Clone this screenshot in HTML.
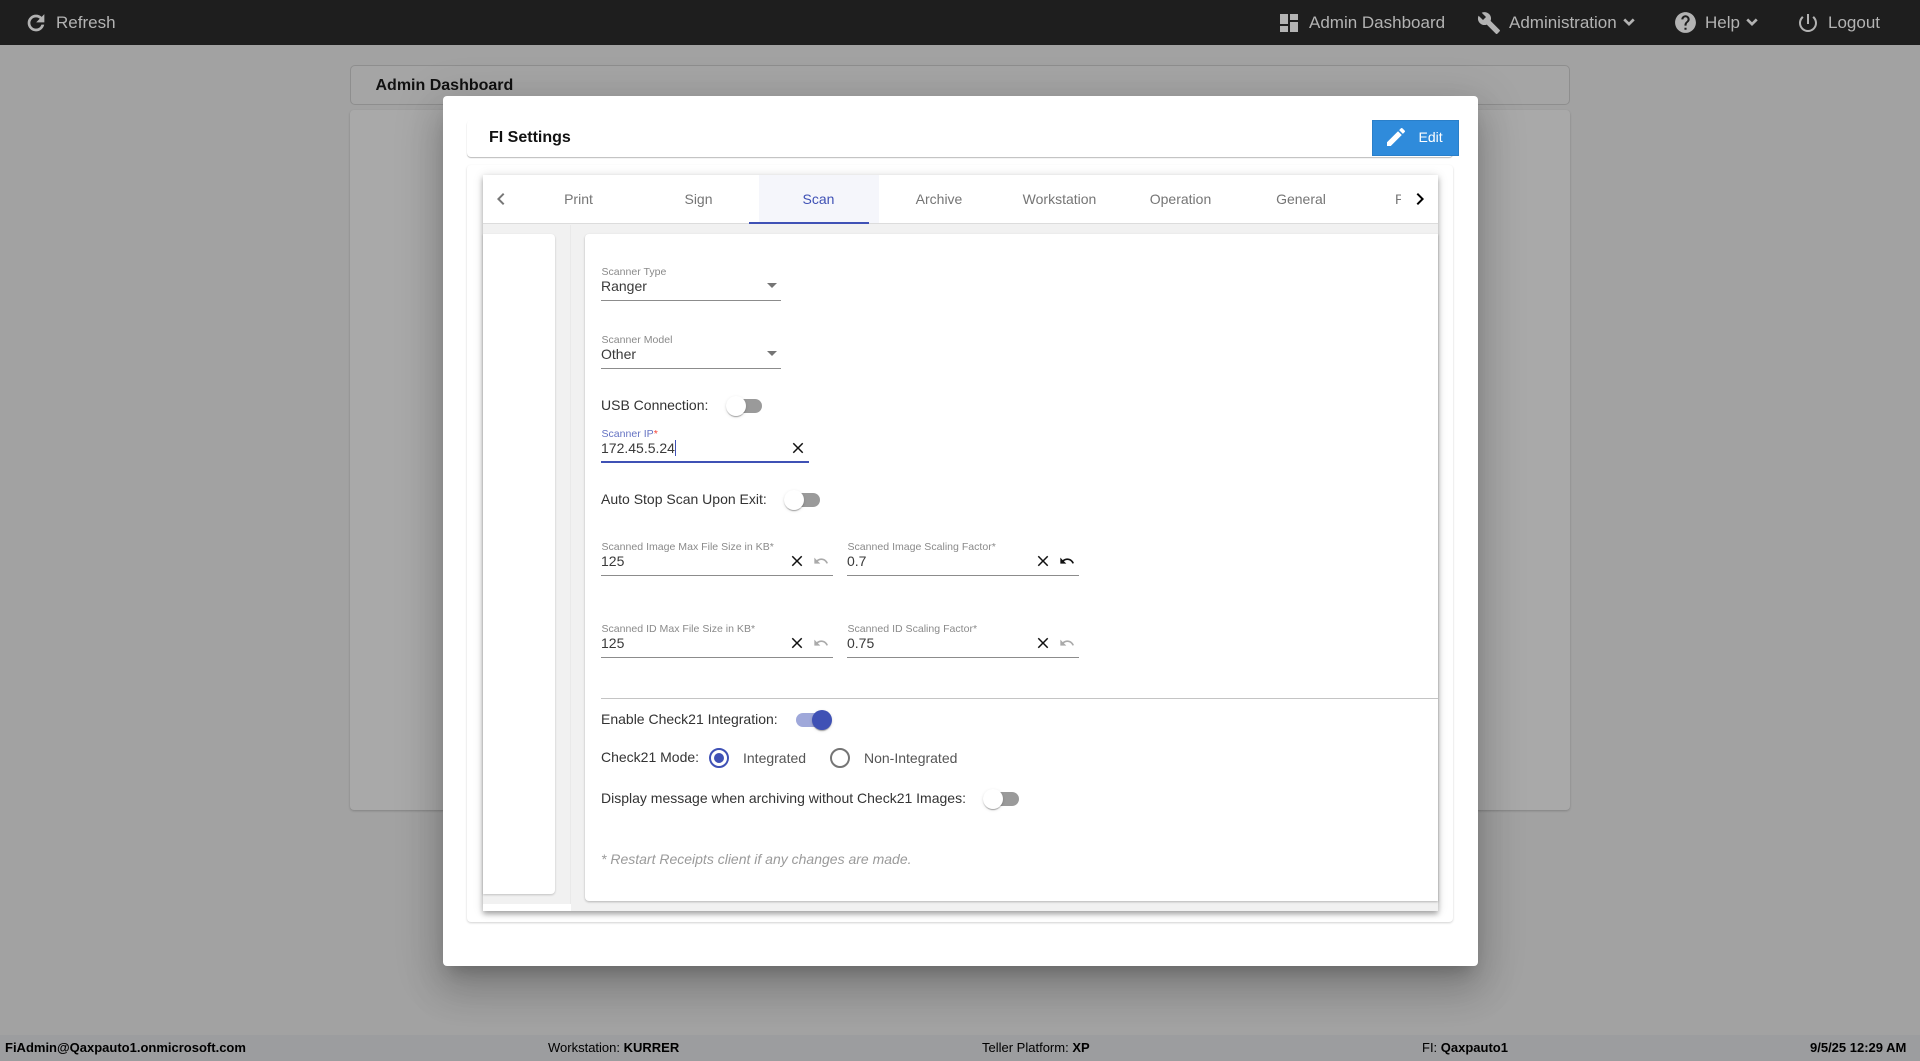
<!DOCTYPE html>
<html><head><meta charset="utf-8"><title>FI Settings</title>
<style>
html,body{margin:0;padding:0;width:1920px;height:1061px;overflow:hidden;background:#a2a2a2;font-family:"Liberation Sans",Arial,sans-serif}
div,span,svg{position:absolute;box-sizing:border-box}
b,i,em{position:static}
.t{white-space:nowrap;line-height:20px;font-size:14px;color:#333}
.n{white-space:nowrap;line-height:20px;font-size:17px;color:#b3b3b3;top:13px}
.l{white-space:nowrap;line-height:14px;font-size:10.55px;color:#8a8a8a}
.v{white-space:nowrap;line-height:20px;font-size:14px;color:#3a3a3a}
.u{height:1px;background:#8c8c8c}
.tab{white-space:nowrap;line-height:20px;font-size:14px;color:#757575;top:189px;width:120px;text-align:center}
.f{white-space:nowrap;line-height:16px;font-size:13px;color:#000;top:1040px}
.f b{font-weight:bold}
.tr{height:14px;border-radius:7px;background:#9a9a9a}
.th{width:20px;height:20px;border-radius:50%;background:#fff;box-shadow:0 2px 1px -1px rgba(0,0,0,.2),0 1px 1px 0 rgba(0,0,0,.14),0 1px 3px 0 rgba(0,0,0,.12)}
svg{display:block}
</style></head><body>

<!-- top nav -->
<div style="left:0;top:0;width:1920px;height:45px;background:#1e1e1e"></div>
<svg style="left:24px;top:11px" width="24" height="24" viewBox="0 0 24 24" fill="#b3b3b3" stroke="#b3b3b3" stroke-width=".7"><path d="M17.65 6.35C16.2 4.9 14.21 4 12 4c-4.42 0-7.99 3.58-7.99 8s3.57 8 7.99 8c3.73 0 6.84-2.55 7.73-6h-2.08c-.82 2.33-3.04 4-5.65 4-3.31 0-6-2.69-6-6s2.69-6 6-6c1.66 0 3.14.69 4.22 1.78L13 11h7V4l-2.35 2.35z"/></svg>
<span class="n" style="left:56px">Refresh</span>

<svg style="left:1277px;top:11px" width="24" height="24" viewBox="0 0 24 24" fill="#b3b3b3"><path d="M3 13h8V3H3v10zm0 8h8v-6H3v6zm10 0h8V11h-8v10zm0-18v6h8V3h-8z"/></svg>
<span class="n" style="left:1309px">Admin Dashboard</span>
<svg style="left:1477px;top:11px" width="24" height="24" viewBox="0 0 24 24" fill="#b3b3b3"><path d="M22.7 19l-9.1-9.1c.9-2.3.4-5-1.5-6.9-2-2-5-2.4-7.4-1.3L9 6 6 9 1.6 4.7C.4 7.1.9 10.1 2.9 12.1c1.9 1.9 4.6 2.4 6.9 1.5l9.1 9.1c.4.4 1 .4 1.4 0l2.3-2.3c.5-.4.5-1.1.1-1.4z"/></svg>
<span class="n" style="left:1509px">Administration</span>
<svg style="left:1619px;top:12px" width="20" height="20" viewBox="0 0 24 24" fill="#b3b3b3" stroke="#b3b3b3" stroke-width="1.2"><path d="M16.59 8.59L12 13.17 7.41 8.59 6 10l6 6 6-6z"/></svg>
<svg style="left:1673px;top:10px" width="25" height="25" viewBox="0 0 24 24" fill="#b3b3b3"><path d="M12 2C6.48 2 2 6.48 2 12s4.48 10 10 10 10-4.48 10-10S17.52 2 12 2zm1 17h-2v-2h2v2zm2.07-7.75l-.9.92C13.45 12.9 13 13.5 13 15h-2v-.5c0-1.1.45-2.1 1.17-2.83l1.24-1.26c.37-.36.59-.86.59-1.41 0-1.1-.9-2-2-2s-2 .9-2 2H8c0-2.21 1.79-4 4-4s4 1.79 4 4c0 .88-.36 1.68-.93 2.25z"/></svg>
<span class="n" style="left:1705px">Help</span>
<svg style="left:1742px;top:12px" width="20" height="20" viewBox="0 0 24 24" fill="#b3b3b3" stroke="#b3b3b3" stroke-width="1.2"><path d="M16.59 8.59L12 13.17 7.41 8.59 6 10l6 6 6-6z"/></svg>
<svg style="left:1796px;top:11px" width="24" height="24" viewBox="0 0 24 24" fill="#b3b3b3"><path d="M13 3h-2v10h2V3zm4.83 2.17l-1.42 1.42C17.99 7.86 19 9.81 19 12c0 3.87-3.13 7-7 7s-7-3.13-7-7c0-2.19 1.01-4.14 2.58-5.42L6.17 5.17C4.23 6.82 3 9.26 3 12c0 4.97 4.03 9 9 9s9-4.03 9-9c0-2.74-1.23-5.18-3.17-6.83z"/></svg>
<span class="n" style="left:1828px">Logout</span>

<!-- background page -->
<div style="left:350px;top:65px;width:1220px;height:40px;border:1px solid #8e8e8e;border-radius:5px;background:#a5a5a5"></div>
<span style="left:375.5px;top:76px;white-space:nowrap;line-height:20px;font-size:16px;font-weight:bold;color:#111">Admin Dashboard</span>
<div style="left:350px;top:110px;width:1220px;height:700px;background:#a9a9a9;border-radius:4px;box-shadow:0 1px 2px rgba(0,0,0,.2)"></div>

<!-- footer -->
<div style="left:0;top:1035px;width:1920px;height:26px;background:#9c9d9f"></div>
<span class="f" style="left:5px;font-weight:bold">FiAdmin@Qaxpauto1.onmicrosoft.com</span>
<span class="f" style="left:548px">Workstation: <b>KURRER</b></span>
<span class="f" style="left:982px">Teller Platform: <b>XP</b></span>
<span class="f" style="left:1422px">FI: <b>Qaxpauto1</b></span>
<span class="f" style="left:1810px;font-weight:bold">9/5/25 12:29 AM</span>

<!-- modal -->
<div style="left:443px;top:96px;width:1035px;height:870px;background:#fff;border-radius:4px;box-shadow:0 11px 15px -7px rgba(0,0,0,.2),0 24px 38px 3px rgba(0,0,0,.14),0 9px 46px 8px rgba(0,0,0,.12)"></div>

<!-- FI Settings header -->
<div style="left:467px;top:120px;width:986px;height:37px;background:#fff;border-radius:4px;box-shadow:0 1px 1px rgba(0,0,0,.28)"></div>
<span style="left:489px;top:128px;white-space:nowrap;line-height:20px;font-size:16px;font-weight:bold;color:#111">FI Settings</span>
<div style="left:1372px;top:120px;width:87px;height:36px;background:#2f8bdb;border:1px solid #2a7fc9"></div>
<svg style="left:1384px;top:125px" width="24" height="24" viewBox="0 0 24 24" fill="#fff"><path d="M3 17.25V21h3.75L17.81 9.94l-3.75-3.75L3 17.25zM20.71 7.04c.39-.39.39-1.02 0-1.41l-2.34-2.34c-.39-.39-1.02-.39-1.41 0l-1.83 1.83 3.75 3.75 1.83-1.83z"/></svg>
<span style="left:1418.5px;top:127px;white-space:nowrap;line-height:20px;font-size:14px;color:#fff">Edit</span>

<!-- settings container -->
<div style="left:467px;top:165px;width:986px;height:757px;background:#fff;border-radius:4px;box-shadow:0 1px 2px rgba(0,0,0,.18)"></div>

<!-- tab card -->
<div style="left:483px;top:175px;width:955px;height:736px;background:#f1f1f1;box-shadow:0 3px 5px rgba(0,0,0,.3),0 1px 10px rgba(0,0,0,.14)"></div>
<div style="left:483px;top:175px;width:955px;height:49px;background:#fff;border-bottom:1px solid #dcdcdc"></div>
<div style="left:759px;top:175px;width:120px;height:48px;background:#f5f6fb"></div>
<div style="left:749px;top:222px;width:120px;height:2px;background:#3f51b5"></div>
<svg style="left:489px;top:187px" width="24" height="24" viewBox="0 0 24 24" fill="#777"><path d="M15.41 7.41L14 6l-6 6 6 6 1.41-1.41L10.83 12z"/></svg>
<span class="tab" style="left:518.5px">Print</span>
<span class="tab" style="left:638.5px">Sign</span>
<span class="tab" style="left:758.5px;color:#3f51b5">Scan</span>
<span class="tab" style="left:879px">Archive</span>
<span class="tab" style="left:999.5px">Workstation</span>
<span class="tab" style="left:1120.5px">Operation</span>
<span class="tab" style="left:1241px">General</span>
<span class="tab" style="left:1395px;width:6px;overflow:hidden;text-align:left">Print</span>
<svg style="left:1408px;top:187px" width="24" height="24" viewBox="0 0 24 24" fill="#000"><path d="M10 6L8.59 7.41 13.17 12l-4.58 4.59L10 18l6-6z"/></svg>

<!-- left panel -->
<div style="left:483px;top:904px;width:88px;height:7px;background:#fff"></div>
<div style="left:570px;top:225px;width:1px;height:679px;background:#e9e9e9"></div>
<div style="left:483px;top:234px;width:72px;height:660px;background:#fff;border-radius:0 4px 4px 0;box-shadow:0 1px 2px rgba(0,0,0,.2)"></div>

<!-- right panel -->
<div style="left:585px;top:234px;width:853px;height:667px;background:#fff;border-radius:4px 0 0 4px;box-shadow:0 1px 2px rgba(0,0,0,.25)"></div>

<!-- Scanner type -->
<span class="l" style="left:601.5px;top:265px">Scanner Type</span>
<span class="v" style="left:601px;top:276px">Ranger</span>
<div style="left:766.5px;top:283px;width:0;height:0;border-left:5px solid transparent;border-right:5px solid transparent;border-top:5px solid #757575"></div>
<div class="u" style="left:601px;top:300px;width:180px"></div>

<!-- Scanner model -->
<span class="l" style="left:601.5px;top:333px">Scanner Model</span>
<span class="v" style="left:601px;top:344px">Other</span>
<div style="left:766.5px;top:351px;width:0;height:0;border-left:5px solid transparent;border-right:5px solid transparent;border-top:5px solid #757575"></div>
<div class="u" style="left:601px;top:368px;width:180px"></div>

<!-- USB -->
<span class="t" style="left:601px;top:395px">USB Connection:</span>
<div class="tr" style="left:728px;top:399px;width:34px"></div>
<div class="th" style="left:726px;top:396px"></div>

<!-- Scanner IP -->
<span class="l" style="left:601.5px;top:427px;color:#6573c3">Scanner IP<span style="position:static;color:#f44336">*</span></span>
<span class="v" style="left:601px;top:438px">172.45.5.24</span>
<div style="left:674.5px;top:440px;width:1px;height:16px;background:#3f51b5"></div>
<svg style="left:789px;top:439px" width="18" height="18" viewBox="0 0 24 24" fill="#111"><path d="M19 6.41L17.59 5 12 10.59 6.41 5 5 6.41 10.59 12 5 17.59 6.41 19 12 13.41 17.59 19 19 17.59 13.41 12z"/></svg>
<div style="left:601px;top:461px;width:208px;height:2px;background:#3f51b5"></div>

<!-- Auto stop -->
<span class="t" style="left:601px;top:489px">Auto Stop Scan Upon Exit:</span>
<div class="tr" style="left:786px;top:493px;width:34px"></div>
<div class="th" style="left:784px;top:490px"></div>

<!-- Row 3 -->
<span class="l" style="left:601.5px;top:540px">Scanned Image Max File Size in KB*</span>
<span class="v" style="left:601px;top:551px">125</span>
<svg style="left:788px;top:552px" width="18" height="18" viewBox="0 0 24 24" fill="#111"><path d="M19 6.41L17.59 5 12 10.59 6.41 5 5 6.41 10.59 12 5 17.59 6.41 19 12 13.41 17.59 19 19 17.59 13.41 12z"/></svg>
<svg style="left:813px;top:553px" width="16" height="16" viewBox="0 0 24 24" fill="#aaa"><path d="M12.5 8c-2.65 0-5.05.99-6.9 2.6L2 7v9h9l-3.62-3.62c1.39-1.16 3.16-1.88 5.12-1.88 3.54 0 6.55 2.31 7.6 5.5l2.37-.78C21.08 11.03 17.15 8 12.5 8z"/></svg>
<div class="u" style="left:601px;top:575px;width:232px"></div>

<span class="l" style="left:847.5px;top:540px">Scanned Image Scaling Factor*</span>
<span class="v" style="left:847px;top:551px">0.7</span>
<svg style="left:1034px;top:552px" width="18" height="18" viewBox="0 0 24 24" fill="#111"><path d="M19 6.41L17.59 5 12 10.59 6.41 5 5 6.41 10.59 12 5 17.59 6.41 19 12 13.41 17.59 19 19 17.59 13.41 12z"/></svg>
<svg style="left:1059px;top:553px" width="16" height="16" viewBox="0 0 24 24" fill="#111"><path d="M12.5 8c-2.65 0-5.05.99-6.9 2.6L2 7v9h9l-3.62-3.62c1.39-1.16 3.16-1.88 5.12-1.88 3.54 0 6.55 2.31 7.6 5.5l2.37-.78C21.08 11.03 17.15 8 12.5 8z"/></svg>
<div class="u" style="left:847px;top:575px;width:232px"></div>

<!-- Row 4 -->
<span class="l" style="left:601.5px;top:622px">Scanned ID Max File Size in KB*</span>
<span class="v" style="left:601px;top:633px">125</span>
<svg style="left:788px;top:634px" width="18" height="18" viewBox="0 0 24 24" fill="#111"><path d="M19 6.41L17.59 5 12 10.59 6.41 5 5 6.41 10.59 12 5 17.59 6.41 19 12 13.41 17.59 19 19 17.59 13.41 12z"/></svg>
<svg style="left:813px;top:635px" width="16" height="16" viewBox="0 0 24 24" fill="#aaa"><path d="M12.5 8c-2.65 0-5.05.99-6.9 2.6L2 7v9h9l-3.62-3.62c1.39-1.16 3.16-1.88 5.12-1.88 3.54 0 6.55 2.31 7.6 5.5l2.37-.78C21.08 11.03 17.15 8 12.5 8z"/></svg>
<div class="u" style="left:601px;top:657px;width:232px"></div>

<span class="l" style="left:847.5px;top:622px">Scanned ID Scaling Factor*</span>
<span class="v" style="left:847px;top:633px">0.75</span>
<svg style="left:1034px;top:634px" width="18" height="18" viewBox="0 0 24 24" fill="#111"><path d="M19 6.41L17.59 5 12 10.59 6.41 5 5 6.41 10.59 12 5 17.59 6.41 19 12 13.41 17.59 19 19 17.59 13.41 12z"/></svg>
<svg style="left:1059px;top:635px" width="16" height="16" viewBox="0 0 24 24" fill="#aaa"><path d="M12.5 8c-2.65 0-5.05.99-6.9 2.6L2 7v9h9l-3.62-3.62c1.39-1.16 3.16-1.88 5.12-1.88 3.54 0 6.55 2.31 7.6 5.5l2.37-.78C21.08 11.03 17.15 8 12.5 8z"/></svg>
<div class="u" style="left:847px;top:657px;width:232px"></div>

<!-- divider -->
<div style="left:601px;top:698px;width:837px;height:1px;background:#c4c4c4"></div>

<!-- Check21 -->
<span class="t" style="left:601px;top:709px">Enable Check21 Integration:</span>
<div class="tr" style="left:796px;top:713px;width:34px;background:#9fa8da"></div>
<div class="th" style="left:812px;top:710px;background:#3f51b5"></div>

<span class="t" style="left:601px;top:747px">Check21 Mode:</span>
<div style="left:709px;top:748px;width:20px;height:20px;border:2px solid #3f51b5;border-radius:50%"></div>
<div style="left:714px;top:753px;width:10px;height:10px;background:#3f51b5;border-radius:50%"></div>
<span class="t" style="left:743px;top:748px;color:#555">Integrated</span>
<div style="left:830px;top:748px;width:20px;height:20px;border:2px solid #757575;border-radius:50%"></div>
<span class="t" style="left:864px;top:748px;color:#555">Non-Integrated</span>

<span class="t" style="left:601px;top:788px">Display message when archiving without Check21 Images:</span>
<div class="tr" style="left:985px;top:792px;width:34px"></div>
<div class="th" style="left:983px;top:789px"></div>

<span class="t" style="left:601px;top:849px;color:#9a9a9a;font-style:italic">* Restart Receipts client if any changes are made.</span>

</body></html>
